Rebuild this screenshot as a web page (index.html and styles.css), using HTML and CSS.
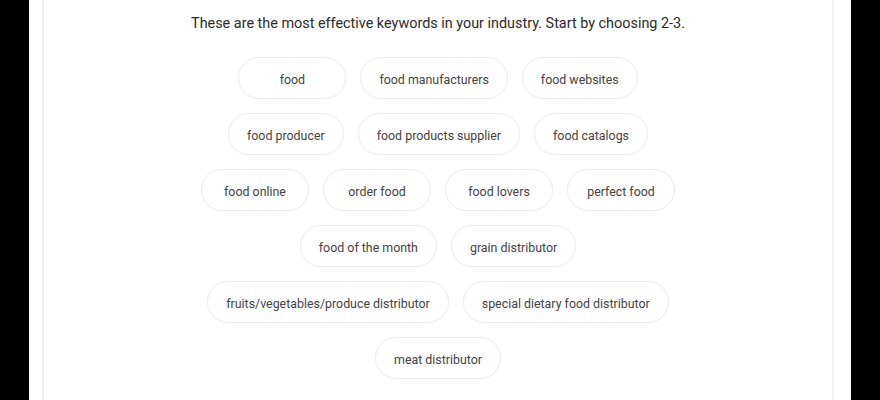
FILE: index.html
```html
<!DOCTYPE html>
<html>

<head>
  <title>Keywords</title>
  <link rel="stylesheet" href="styles.css">
</head>

<body>
  <div class="page">
    <div class="card">
      <p class="intro">These are the most effective keywords in your industry. Start by choosing 2-3.</p>
      <div class="chips">
        <div class="chip-row">
          <button class="chip">food</button>
          <button class="chip">food manufacturers</button>
          <button class="chip">food websites</button>
        </div>
        <div class="chip-row">
          <button class="chip">food producer</button>
          <button class="chip">food products supplier</button>
          <button class="chip">food catalogs</button>
        </div>
        <div class="chip-row">
          <button class="chip">food online</button>
          <button class="chip">order food</button>
          <button class="chip">food lovers</button>
          <button class="chip">perfect food</button>
        </div>
        <div class="chip-row">
          <button class="chip">food of the month</button>
          <button class="chip">grain distributor</button>
        </div>
        <div class="chip-row">
          <button class="chip">fruits/vegetables/produce distributor</button>
          <button class="chip">special dietary food distributor</button>
        </div>
        <div class="chip-row">
          <button class="chip">meat distributor</button>
        </div>
      </div>
    </div>
  </div>
</body>

</html>
```

FILE: styles.css
```css
body {
  margin: 0;
  background-color: #000;
  font-family: Roboto, "Noto Sans", sans-serif;
  height: 100vh;
  overflow: hidden;
}

.page {
  width: 822px;
  margin: 0 auto;
  padding: 0 17px 0 13px;
  box-sizing: border-box;
  background-color: #fff;
  height: 100%;
}

.card {
  border-left: 2px solid #f1f1f1;
  border-right: 2px solid #f1f1f1;
  height: 100%;
  box-sizing: border-box;
}

.intro {
  margin: 0;
  padding-top: 14px;
  text-align: center;
  font-size: 14.4px;
  line-height: 20px;
  color: #2b2b2b;
}

.chips {
  display: flex;
  flex-direction: column;
  gap: 14px;
  margin-top: 23px;
}

.chip-row {
  display: flex;
  justify-content: center;
  gap: 14px;
}

.chip {
  height: 42px;
  min-width: 108px;
  padding: 2px 18px 0;
  border: 1px solid #ececec;
  border-radius: 21px;
  background-color: #fff;
  font-family: inherit;
  font-size: 12.4px;
  color: #444;
  cursor: pointer;
}
```
